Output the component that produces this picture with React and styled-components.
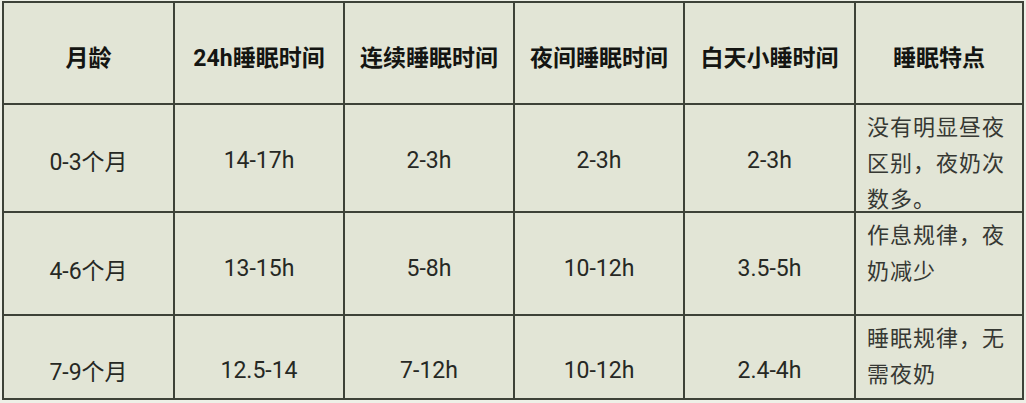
import React from 'react';
import styled, { createGlobalStyle } from 'styled-components';

const GlobalStyle = createGlobalStyle`
    html, body {
        margin: 0;
        padding: 0;
        background: #eef0e7;
    }
    body {
        font-family: Roboto, "Noto Sans CJK SC", sans-serif;
    }
`;

const Page = styled.div`
    padding: 1px 0 0 2px;
    width: 1026px;
    height: 403px;
    box-sizing: border-box;
`;

const Grid = styled.div`
    display: grid;
    grid-template-columns: 169px 168px 168px 168px 169px 166px;
    grid-template-rows: 100px 106px 101px 82px;
    gap: 2px;
    padding: 2px;
    width: max-content;
    background: #3d4238;
`;

const Cell = styled.div`
    background: #e2e5d6;
    display: flex;
    align-items: center;
    justify-content: center;
    font-size: 23px;
    color: #262824;
    padding-top: ${({ offset }) => offset || 0}px;
    box-sizing: border-box;
`;

const HeadCell = styled(Cell)`
    font-weight: 700;
    color: #141512;
    padding-top: 6px;
`;

const NoteCell = styled.div`
    background: #e2e5d6;
    font-size: 22px;
    letter-spacing: 1px;
    line-height: 36px;
    color: #363833;
    padding: 5px 8px 0 11px;
`;

const headers = ['月龄', '24h睡眠时间', '连续睡眠时间', '夜间睡眠时间', '白天小睡时间', '睡眠特点'];

const rows = [
    { cells: ['0-3个月', '14-17h', '2-3h', '2-3h', '2-3h'], note: '没有明显昼夜区别，夜奶次数多。', offset: 4 },
    { cells: ['4-6个月', '13-15h', '5-8h', '10-12h', '3.5-5h'], note: '作息规律，夜奶减少', offset: 10 },
    { cells: ['7-9个月', '12.5-14', '7-12h', '10-12h', '2.4-4h'], note: '睡眠规律，无需夜奶', offset: 26 },
];

export default function App() {
    return (
        <Page>
            <GlobalStyle />
            <Grid>
                {headers.map((h) => (
                    <HeadCell key={h}>{h}</HeadCell>
                ))}
                {rows.map((row) => (
                    <React.Fragment key={row.cells[0]}>
                        {row.cells.map((c, i) => (
                            <Cell key={i} offset={row.offset}>{c}</Cell>
                        ))}
                        <NoteCell>{row.note}</NoteCell>
                    </React.Fragment>
                ))}
            </Grid>
        </Page>
    );
}
